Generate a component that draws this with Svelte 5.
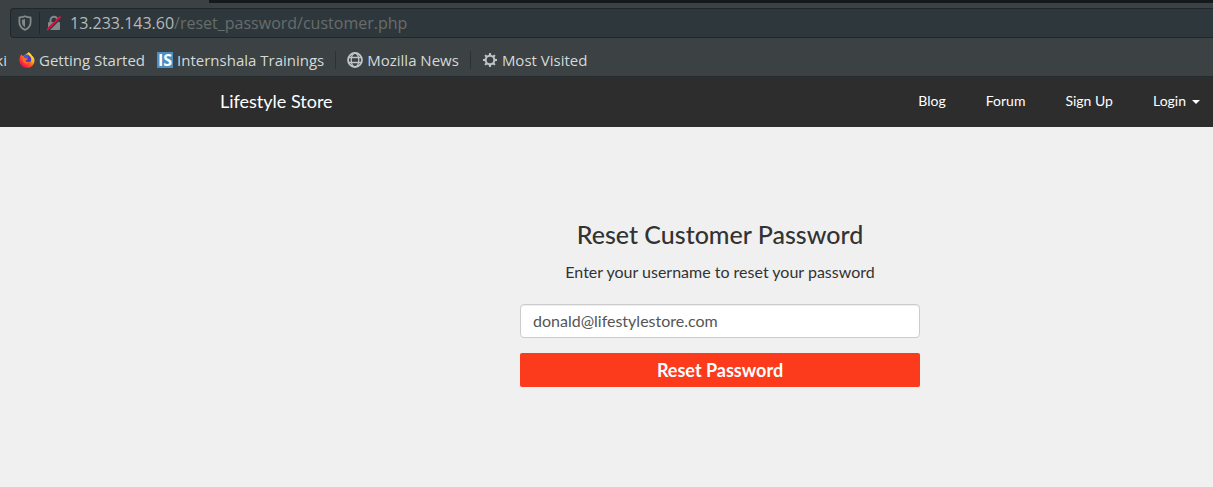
<script>
  let email = $state('donald@lifestylestore.com');
  const links = ['Blog', 'Forum', 'Sign Up'];
  const teeth = [0, 45, 90, 135, 180, 225, 270, 315];
</script>

<div class="browser">
  <div class="tabs"><div class="active-tab"></div></div>
  <div class="address">
    <svg width="14" height="16" viewBox="0 0 14 16" aria-hidden="true">
      <path d="M7 1.2C5.200 2.100 3.300 2.400 1.400 2.400V7.200C1.400 11 3.700 13.400 7 14.800C10.300 13.400 12.600 11 12.600 7.200V2.400C10.700 2.400 8.800 2.100 7 1.200Z" fill="none" stroke="#83888a" stroke-width="1.800" stroke-linejoin="round" />
      <path d="M7 4C6 4.400 5 4.600 4 4.700V7.200C4 9.500 5.200 11.200 7 12.200Z" fill="#83888a" />
    </svg>
    <span class="divider"></span>
    <svg width="16" height="16" viewBox="0 0 16 16" aria-hidden="true">
      <path d="M4.500 8V5.200a3.500 3.500 0 0 1 7 0V8" fill="none" stroke="#83888a" stroke-width="2" />
      <rect x="2" y="7" width="12" height="8" rx="1" fill="#83888a" />
      <path d="M2 15L15 2" stroke="#2e383c" stroke-width="3" />
      <path d="M1 15L14.500 1.500" stroke="#ff0039" stroke-width="1.800" />
    </svg>
    <span class="url"><b>13.233.143.60</b>/reset_password/customer.php</span>
  </div>
  <nav class="bookmarks" aria-label="Bookmarks">
    <a class="wiki" href="#wiki">ki</a>
    <a class="started" href="#started">
      <svg width="16" height="16" viewBox="0 0 16 16" aria-hidden="true">
        <defs>
          <linearGradient id="flame" x1="0.900" y1="0.100" x2="0.200" y2="0.900">
            <stop offset="0" stop-color="#fff44f" />
            <stop offset="0.350" stop-color="#ffb01e" />
            <stop offset="0.600" stop-color="#ff5a20" />
            <stop offset="1" stop-color="#f50a54" />
          </linearGradient>
        </defs>
        <path d="M2.300 2.600L3.600 4C4.200 3.800 4.700 3.800 5.200 3.900C6 2 7.700 2 8 1.500C9 1 9.300 .4 9.500 0C11.300 1.200 12.300 2.300 12.800 3.500C15 5.200 15.700 7.400 15.400 9.400C14.900 13.200 11.900 15.800 8 15.800C3.600 15.800 .4 12.500 .4 8.300C.4 6 1.100 4 2.300 2.600Z" fill="url(#flame)" />
        <circle cx="8" cy="7.500" r="4.200" fill="#4a37c8" />
        <path d="M3.500 5.500C5 4.800 6 5.300 6.800 6.100L9 6.700L7.800 8L6.500 8.500C7.300 10.100 9.200 10.400 11.500 9.600C10.500 12.300 6.600 12.700 4.600 10.600C3.400 9.200 3.100 7.200 3.500 5.500Z" fill="#ff6a1e" />
        <path d="M5.200 3.900C6.700 2.300 9 2 10.300 3.600L8.600 4.700L9.500 6L6.600 6Z" fill="#2f62ee" />
      </svg>
      Getting Started
    </a>
    <a href="#trainings"><span class="badge" aria-hidden="true">IS</span>Internshala Trainings</a>
    <span class="separator"></span>
    <a href="#mozilla">
      <svg width="16" height="16" viewBox="0 0 16 16" fill="none" stroke="#bdc5c5" aria-hidden="true">
        <circle cx="8" cy="8" r="7" stroke-width="1.800" />
        <ellipse cx="8" cy="8" rx="3.800" ry="7" stroke-width="1.300" />
        <path d="M2 5.500H14M2 10.500H14" stroke-width="1.300" />
      </svg>
      Mozilla News
    </a>
    <span class="separator"></span>
    <a href="#visited">
      <svg width="16" height="16" viewBox="0 0 16 16" aria-hidden="true">
        <circle cx="8" cy="8" r="4.300" fill="none" stroke="#bdc5c5" stroke-width="2" />
        {#each teeth as angle}
          <path d="M6.700 4L7.100 1H8.900L9.300 4Z" fill="#bdc5c5" transform="rotate({angle} 8 8)" />
        {/each}
      </svg>
      Most Visited
    </a>
  </nav>
</div>

<header>
  <a class="brand" href="#home">Lifestyle Store</a>
  <nav class="menu" aria-label="Main">
    {#each links as link}
      <a href="#{link}">{link}</a>
    {/each}
    <button type="button" class="login" aria-haspopup="true">Login <span class="caret"></span></button>
  </nav>
</header>

<main>
  <form onsubmit={(e) => e.preventDefault()}>
    <h1>Reset Customer Password</h1>
    <label for="username">Enter your username to reset your password</label>
    <input id="username" type="text" bind:value={email} />
    <button type="submit" class="submit">Reset Password</button>
  </form>
</main>

<style>
  :global(body) {
    margin: 0;
    background: #f0f0f0;
    overflow-x: hidden;
  }
  a {
    color: inherit;
    text-decoration: none;
  }
  svg {
    flex: none;
  }
  .browser {
    background: #3c4143;
    border-bottom: 1px solid #252c2f;
    font-family: "Open Sans", "Noto Sans", sans-serif;
    white-space: nowrap;
    overflow: hidden;
  }
  .tabs {
    height: 3px;
    background: #14191b;
    margin-bottom: 5px;
  }
  .active-tab {
    width: 209px;
    height: 3px;
    background: #3c4143;
  }
  .address {
    display: flex;
    align-items: center;
    box-sizing: border-box;
    height: 30px;
    margin-left: 10px;
    padding-left: 7px;
    border: 1px solid #20282b;
    border-right: 0;
    border-radius: 4px 0 0 4px;
    background: #2e383c;
  }
  .divider {
    width: 1px;
    height: 22px;
    margin: 0 6px 0 7px;
    background: #20282b;
  }
  .url {
    margin-left: 8px;
    font-size: 16px;
    line-height: 24px;
    color: #686c6c;
  }
  .url b {
    font-weight: 400;
    color: #b5b9b8;
  }
  .bookmarks {
    display: flex;
    align-items: center;
    padding: 12px 0 6px;
    font-size: 15px;
    line-height: 20px;
    color: #d3dad9;
  }
  .bookmarks a {
    display: flex;
    align-items: center;
    gap: 4px;
  }
  .bookmarks .wiki {
    width: 7px;
    margin-right: 12px;
    justify-content: flex-end;
  }
  .started {
    margin-right: 12px;
  }
  .badge {
    width: 16px;
    height: 16px;
    background: #4a90c4;
    color: #fff;
    font: 700 16px/16px "Open Sans", sans-serif;
    text-align: center;
  }
  .separator {
    width: 1px;
    height: 18px;
    margin: 0 11px;
    background: #2c3234;
  }
  header {
    display: flex;
    align-items: center;
    justify-content: space-between;
    box-sizing: border-box;
    height: 50px;
    padding: 0 13px 2px 220px;
    background: #2d2d2d;
    color: #fff;
    font-family: Lato, sans-serif;
  }
  .brand {
    font-size: 18px;
    line-height: 20px;
  }
  .menu {
    display: flex;
    align-items: center;
    gap: 40px;
    font-size: 14px;
    line-height: 20px;
  }
  .login {
    display: flex;
    align-items: center;
    gap: 6px;
    padding: 0;
    border: 0;
    background: none;
    color: inherit;
    font: inherit;
  }
  .caret {
    margin-top: 2px;
    border: 4px solid transparent;
    border-top-color: #fff;
    border-bottom: 0;
  }
  main {
    padding: 92px 0 100px 227px;
    font-family: Lato, sans-serif;
    color: #333;
  }
  form {
    display: flex;
    flex-direction: column;
    max-width: 400px;
    margin: 0 auto;
    text-align: center;
  }
  h1 {
    margin: 0 0 12px;
    font-size: 25px;
    line-height: 30px;
    font-weight: 500;
  }
  label {
    margin-bottom: 22px;
    font-size: 16px;
    line-height: 21px;
  }
  input {
    box-sizing: border-box;
    height: 34px;
    margin: 0 0 15px;
    padding: 5px 12px 7px;
    border: 1px solid #ccc;
    border-radius: 4px;
    box-shadow: inset 0 1px 1px rgba(0, 0, 0, 0.075);
    background: #fff;
    color: #555;
    font: 16px/20px Lato, sans-serif;
  }
  .submit {
    height: 34px;
    padding: 0;
    border: 0;
    border-radius: 2px;
    background: #fc3a1c;
    color: #fff;
    font: 700 18px/20px Lato, sans-serif;
  }
</style>
